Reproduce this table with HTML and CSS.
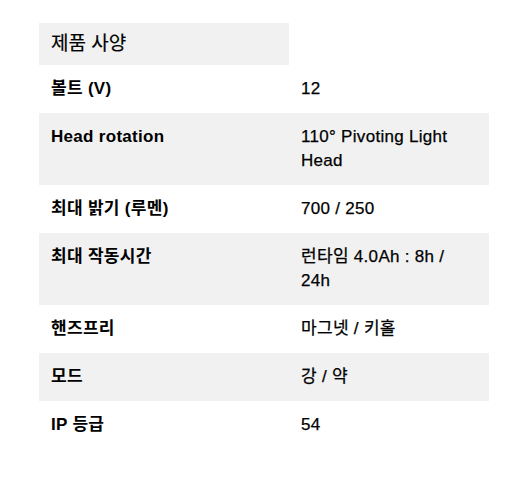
FILE: index.html
```html
<!DOCTYPE html>
<html lang="ko">
<head>
<meta charset="utf-8">
<link rel="stylesheet" href="styles.css">
</head>
<body>
<div class="wrap">
<table class="spec">
  <thead>
    <tr><th class="head">제품 사양</th><th class="blank"></th></tr>
  </thead>
  <tbody>
    <tr><td class="k">볼트 (V)</td><td class="v">12</td></tr>
    <tr class="alt"><td class="k">Head rotation</td><td class="v">110° Pivoting Light Head</td></tr>
    <tr><td class="k">최대 밝기 (루멘)</td><td class="v">700 / 250</td></tr>
    <tr class="alt"><td class="k">최대 작동시간</td><td class="v">런타임 4.0Ah : 8h / 24h</td></tr>
    <tr><td class="k">핸즈프리</td><td class="v">마그넷 / 키홀</td></tr>
    <tr class="alt"><td class="k">모드</td><td class="v">강 / 약</td></tr>
    <tr><td class="k">IP 등급</td><td class="v">54</td></tr>
  </tbody>
</table>
</div>
</body>
</html>
```

FILE: styles.css
```css
html, body {
  margin: 0;
  padding: 0;
  background: #fff;
}
.wrap {
  padding: 23px 0 0 39px;
}
.spec {
  border-collapse: collapse;
  width: 450px;
  table-layout: fixed;
  font-family: "Liberation Sans", Arial, "Noto Sans CJK KR", sans-serif;
  color: #000;
}
.spec th, .spec td {
  text-align: left;
  vertical-align: top;
  padding: 12px 12px;
  line-height: 24px;
  font-size: 17px;
  letter-spacing: 0.3px;
}
.spec th.head {
  width: 226px;
  background: #f1f1f1;
  font-weight: normal;
  font-size: 19px;
  letter-spacing: 0;
  padding: 9px 12px;
  -webkit-text-stroke: 0.2px #000;
}
.spec th.blank {
  width: 176px;
  background: #fff;
}
.spec td.k {
  font-weight: bold;
}
.spec td.v {
  font-weight: normal;
  -webkit-text-stroke: 0.25px #000;
}
.spec tr.alt td {
  background: #f1f1f1;
}
```
